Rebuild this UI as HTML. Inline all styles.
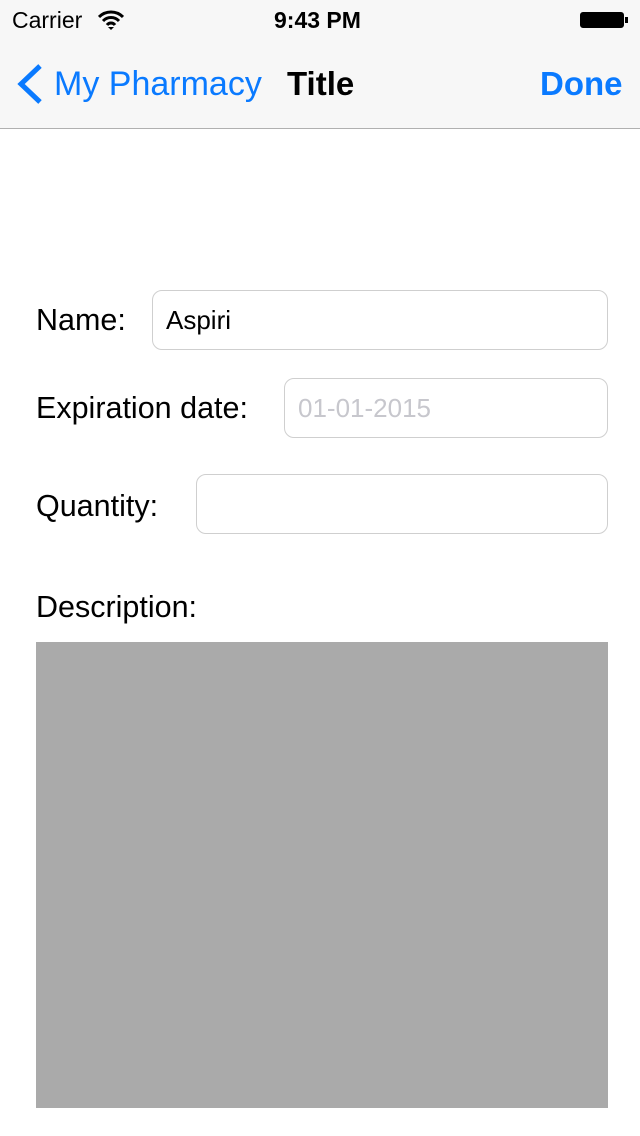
<!DOCTYPE html>
<html><head><style>
body{margin:0;width:640px;height:1136px;background:#fff;font-family:"Liberation Sans",sans-serif;position:relative;overflow:hidden}
.a{position:absolute;white-space:nowrap}
.f{position:absolute;border:1px solid #cfcfcf;border-radius:10px;box-sizing:border-box;background:#fff}
.l{font-size:30.5px;color:#000}
</style></head><body>
<div class="a" style="left:0;top:0;width:640px;height:128px;background:#f7f7f7;border-bottom:1px solid #b0b0b0"></div>
<div class="a" style="left:12px;top:7px;font-size:23px">Carrier</div>
<svg class="a" style="left:98px;top:10px" width="26" height="20" viewBox="0 0 26 20"><path d="M1 7a17 17 0 0 1 24 0M5 11a11 11 0 0 1 16 0M9 15a5 5 0 0 1 8 0" stroke="#000" stroke-width="3" fill="none"/><path d="M10 17l3 3 3-3z" fill="#000"/></svg>
<div class="a" style="left:274px;top:7px;font-size:23px;font-weight:bold">9:43 PM</div>
<div class="a" style="left:580px;top:12px;width:44px;height:16px;border:1.5px solid #000;border-radius:3px;background:#000;box-sizing:border-box"></div>
<div class="a" style="left:625px;top:17px;width:3px;height:6px;background:#000"></div>
<svg class="a" style="left:14px;top:63px" width="30" height="42" viewBox="0 0 30 42"><path d="M26 3L7 21l19 18" stroke="#0a7aff" stroke-width="5" fill="none"/></svg>
<div class="a" style="left:54px;top:65px;font-size:34px;color:#0a7aff">My Pharmacy</div>
<div class="a" style="left:287px;top:65px;font-size:33px;font-weight:bold">Title</div>
<div class="a" style="left:540px;top:65px;font-size:33px;font-weight:bold;color:#0a7aff">Done</div>
<div class="a l" style="left:36px;top:303px">Name:</div>
<div class="f" style="left:152px;top:290px;width:456px;height:60px"></div>
<div class="a" style="left:166px;top:305px;font-size:26px">Aspiri</div>
<div class="a l" style="left:36px;top:391px">Expiration date:</div>
<div class="f" style="left:284px;top:378px;width:324px;height:60px"></div>
<div class="a" style="left:298px;top:393px;font-size:26px;color:#c7c7cd">01-01-2015</div>
<div class="a l" style="left:36px;top:489px">Quantity:</div>
<div class="f" style="left:196px;top:474px;width:412px;height:60px"></div>
<div class="a l" style="left:36px;top:590px">Description:</div>
<div class="a" style="left:36px;top:642px;width:572px;height:466px;background:#aaa"></div>
</body></html>
